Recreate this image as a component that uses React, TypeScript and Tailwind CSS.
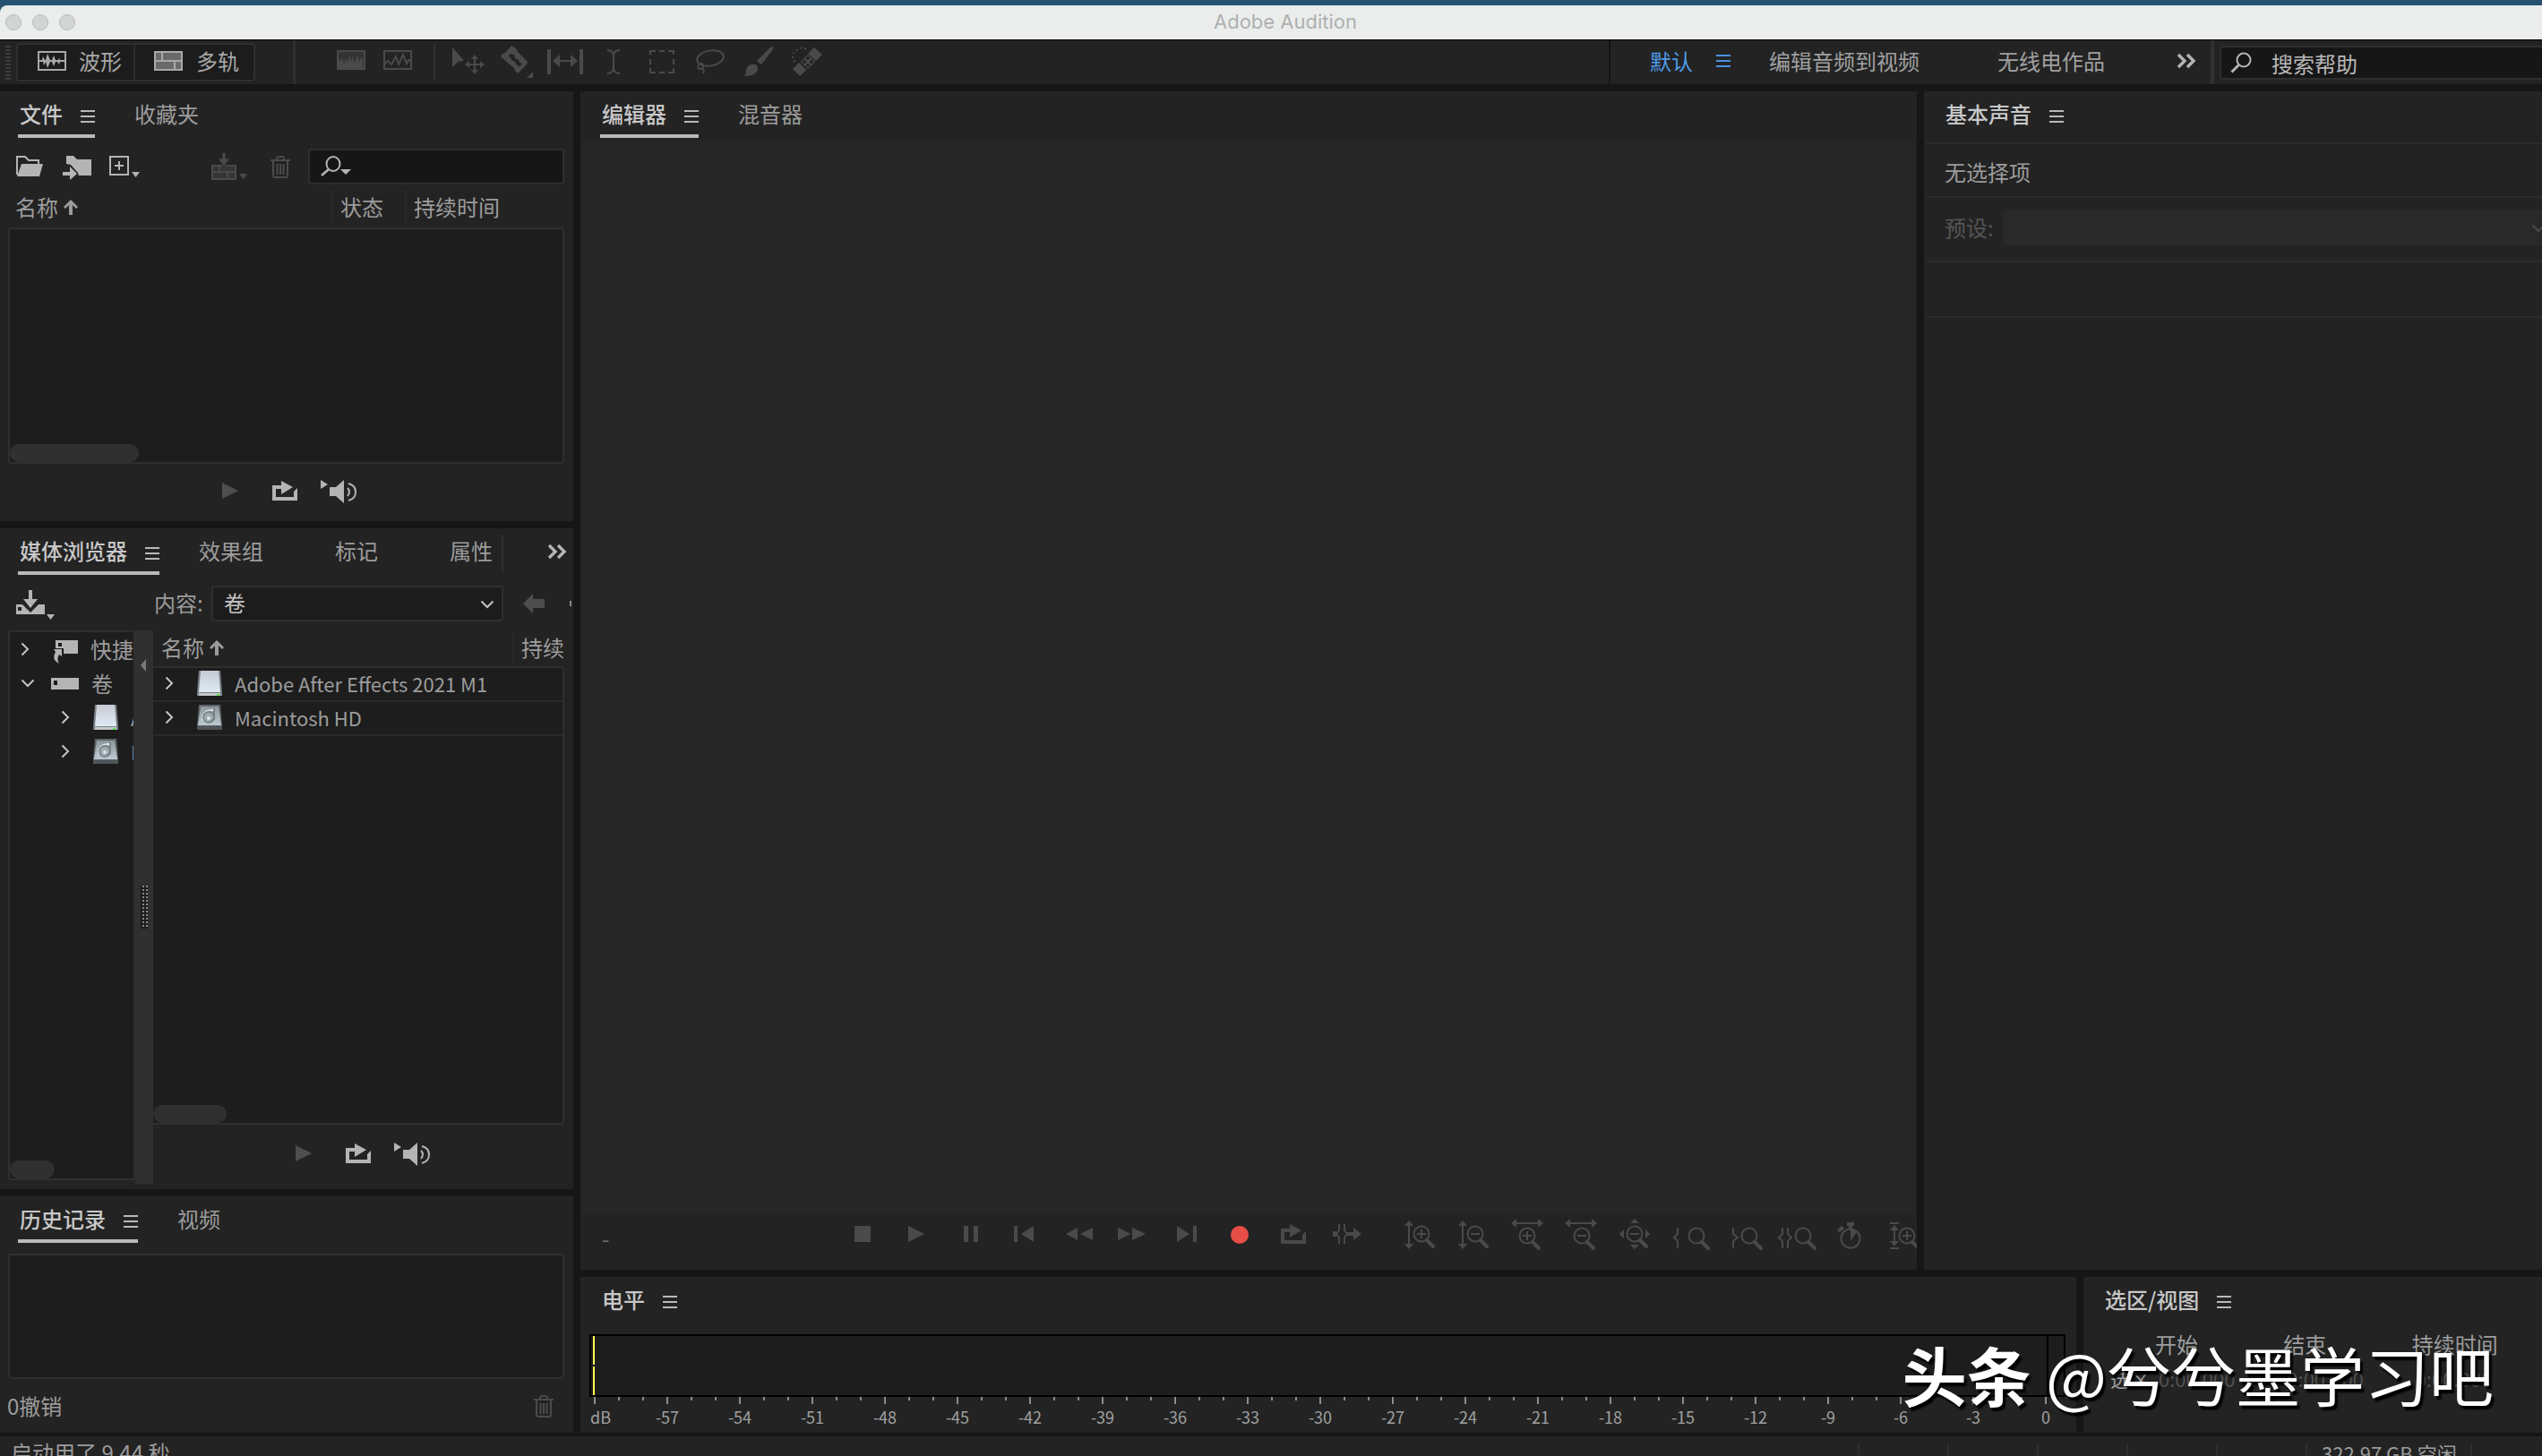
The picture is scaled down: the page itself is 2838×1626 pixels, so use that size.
import type { ReactNode } from "react";

type IconProps = { w: number; h: number; className?: string; children: ReactNode };

function Icon({ w, h, className = "", children }: IconProps) {
  return (
    <svg
      width={w}
      height={h}
      viewBox={`0 0 ${w} ${h}`}
      fill="currentColor"
      aria-hidden="true"
      className={`shrink-0 ${className}`}
    >
      {children}
    </svg>
  );
}

const line = { fill: "none", stroke: "currentColor", strokeWidth: 2 } as const;

/* ---------- shared pieces ---------- */

function MenuIcon({ className = "" }: { className?: string }) {
  return (
    <Icon w={16} h={14} className={className}>
      <path d="M0 0h16v2H0zM0 6h16v2H0zM0 12h16v2H0z" />
    </Icon>
  );
}

function ActiveTab({ children, underline = true }: { children: ReactNode; underline?: boolean }) {
  return (
    <div
      className={
        underline
          ? "flex items-center gap-5 border-b-4 border-[#b9b9b9] pt-1 pb-0.5"
          : "flex items-center gap-5 border-b-4 border-transparent pt-1 pb-0.5"
      }
    >
      <button className="pl-0.5 font-medium leading-[42px] text-[#c8c8c8]">{children}</button>
      <button aria-label="面板菜单" className="pt-1.5 text-[#b9b9b9]">
        <MenuIcon />
      </button>
    </div>
  );
}

function Tab({ children, className = "" }: { children: ReactNode; className?: string }) {
  return <button className={`pt-1 pb-1.5 leading-[42px] ${className}`}>{children}</button>;
}

function MoreIcon() {
  return (
    <Icon w={22} h={18}>
      <path d="M2 2l7 7-7 7M12 2l7 7-7 7" {...line} strokeWidth={3.4} />
    </Icon>
  );
}

function ChevronRight({ className = "" }: { className?: string }) {
  return (
    <Icon w={10} h={16} className={className}>
      <path d="M1.500 1.500L8 8l-6.500 6.500" {...line} />
    </Icon>
  );
}

function ChevronDown({ className = "" }: { className?: string }) {
  return (
    <Icon w={16} h={10} className={className}>
      <path d="M1.500 1.500L8 8l6.500-6.500" {...line} />
    </Icon>
  );
}

function TrashIcon() {
  return (
    <Icon w={22} h={25}>
      <path d="M0 5h22M7 5V3q0-2 2-2h4q2 0 2 2v2M3 6v16q0 2 2 2h12q2 0 2-2V6M7.500 9v12M11 9v12M14.500 9v12" {...line} />
    </Icon>
  );
}

function LoopIcon() {
  return (
    <Icon w={28} h={22}>
      <path d="M0 5h10V0l13 7-13 8V9H4v9h20v-6l4-4v14H0z" />
    </Icon>
  );
}

function PreviewBar({ className }: { className: string }) {
  return (
    <div className={`flex shrink-0 items-center ${className}`}>
      <button aria-label="播放" disabled className="mr-[38px] text-[#4e4e4e]">
        <Icon w={18} h={18}>
          <path d="M0 0l18 9L0 18z" />
        </Icon>
      </button>
      <button aria-label="循环播放" className="mr-[26px] text-[#b4b4b4]">
        <LoopIcon />
      </button>
      <button aria-label="自动播放" className="pt-0.5 text-[#b4b4b4]">
        <Icon w={40} h={28}>
          <path d="M0 1l8 5-8 5z" />
          <path d="M10 9h7l9-8v26l-9-8h-7z" />
          <path d="M30 10q4 4 0 9M31 5q8 2 8 9.500T31 24" {...line} />
        </Icon>
      </button>
    </div>
  );
}

function Thumb({ className }: { className: string }) {
  return <div className={`absolute bottom-0 left-0 h-5 rounded-full bg-[#303030] ${className}`} />;
}

function RemovableDrive() {
  return (
    <Icon w={28} h={28}>
      <defs>
        <linearGradient id="drv" x1="0" y1="0" x2="0" y2="1">
          <stop offset="0" stopColor="#c6c9d2" />
          <stop offset="1" stopColor="#dfebf5" />
        </linearGradient>
      </defs>
      <path d="M2 0h24l2 25v3H0v-3z" fill="#7b8187" />
      <path d="M4 0h20l2 24H2z" fill="url(#drv)" />
      <path d="M2 25h24v3H2z" fill="#c4c8c6" />
      <path d="M22 26h3v2h-3z" fill="#5be04a" />
    </Icon>
  );
}

function HardDrive() {
  return (
    <Icon w={28} h={28}>
      <defs>
        <linearGradient id="hdd" x1="0" y1="0" x2="0" y2="1">
          <stop offset="0" stopColor="#8d979b" />
          <stop offset="1" stopColor="#bccad1" />
        </linearGradient>
      </defs>
      <path d="M2 0h24l2 23v5H0v-5z" fill="#5d6467" />
      <path d="M4 2h20l3 21H1z" fill="url(#hdd)" />
      <path d="M6 18q0-11 8-12h3" fill="none" stroke="#dbe4e8" strokeWidth="1.500" />
      <circle cx="13" cy="14" r="6" fill="#9dabb1" stroke="#6f7b80" strokeWidth="1.500" />
      <circle cx="13" cy="15" r="2" fill="#dce5e9" />
      <path d="M19 4v12l-4 3" fill="none" stroke="#6f7b80" strokeWidth="1.500" />
      <path d="M16 5h2v2h-2z" fill="#eef3f5" />
      <path d="M0 24h28v4H0z" fill="#4e5457" />
    </Icon>
  );
}

/* ---------- title bar and toolbar ---------- */

function TitleBar() {
  return (
    <header className="shrink-0 bg-[#265372]">
      <div className="mt-1.5 grid h-[38px] grid-cols-[1fr_auto_1fr] items-center rounded-tl-lg bg-[#ebedec]">
        <div className="flex gap-3 pl-1.5">
          <button aria-label="关闭" className="size-[18px] rounded-full border border-[#b9bbba] bg-[#d3d5d4]" />
          <button aria-label="最小化" className="size-[18px] rounded-full border border-[#b9bbba] bg-[#d3d5d4]" />
          <button aria-label="缩放" className="size-[18px] rounded-full border border-[#b9bbba] bg-[#d3d5d4]" />
        </div>
        <h1 className="pb-0.5 pl-8 font-['Inter'] text-[22px] leading-8 text-[#aeb0af]">Adobe Audition</h1>
      </div>
    </header>
  );
}

const tools: { name: string; icon: ReactNode }[] = [
  {
    name: "移动工具",
    icon: (
      <Icon w={36} h={32}>
        <path d="M0 0l13 14.500-7 1.500-6 6z" />
        <path d="M25 10v18M16 19h18" {...line} />
        <path d="M25 8l4 5h-8zM25 30l4-5h-8zM14 19l5-4v8zM36 19l-5-4v8z" />
      </Icon>
    ),
  },
  {
    name: "切断所选剪辑工具",
    icon: (
      <Icon w={36} h={36}>
        <path
          fillRule="evenodd"
          d="M12 0l5 3 2 4 11 11-1 3-10 10-3-3-1-3L2 14l-2-2 2-3 3-1zM11 9l-3 3 3 1 1 3 4 2 2 4 3 1 3-3-3-1-1-3-4-2-1-4z"
        />
        <path d="M36 29v7h-7z" />
      </Icon>
    ),
  },
  {
    name: "滑动工具",
    icon: (
      <Icon w={40} h={28}>
        <path d="M0 0h4v28H0zM36 0h4v28h-4zM6 13l8-7v6h12V6l8 7-8 7v-6H14v6z" />
      </Icon>
    ),
  },
  {
    name: "时间选择工具",
    icon: (
      <Icon w={14} h={28}>
        <path d="M0 1q7 0 7 7v12q0 7-7 7M14 1q-7 0-7 7v12q0 7 7 7" {...line} />
      </Icon>
    ),
  },
  {
    name: "框选工具",
    icon: (
      <Icon w={28} h={28}>
        <path d="M1 6V2h6M11 2h6M21 2h6v4M27 11v6M27 21v5h-6M17 26h-6M7 26H1v-5M1 17v-6" {...line} />
      </Icon>
    ),
  },
  {
    name: "套索选择工具",
    icon: (
      <Icon w={32} h={28}>
        <ellipse cx="16" cy="10" rx="15" ry="8.500" transform="rotate(-10 16 10)" {...line} />
        <path d="M3 17q-2 5 2 5t3-4-4-1M6 21q4 2 2 6" {...line} />
      </Icon>
    ),
  },
  {
    name: "画笔选择工具",
    icon: (
      <Icon w={34} h={34}>
        <path d="M32 0q2 1 1 3L20 20l-5-4L29 2q1-2 3-2zM9 20q6-1 7 4 0 9-16 9 3-2 3-6 1-6 6-7z" />
      </Icon>
    ),
  },
  {
    name: "污点修复画笔工具",
    icon: (
      <Icon w={34} h={34}>
        <path d="M25 1l9 8-7 7-9-8zM8 18l8 8-7 7-8-8z" />
        <path fillRule="evenodd" d="M18 9l8 8-8 8-8-8zM18 11a2 2 0 100 4 2 2 0 000-4zM22 15a2 2 0 100 4 2 2 0 000-4zM14 15a2 2 0 100 4 2 2 0 000-4zM18 19a2 2 0 100 4 2 2 0 000-4z" />
        <path d="M16 3Q12 0 7 3T1 9t3 9" {...line} strokeDasharray="2 3" />
      </Icon>
    ),
  },
];

function Toolbar() {
  return (
    <div className="flex h-[50px] shrink-0 items-center overflow-hidden border-t border-black bg-[#232323]">
      <div className="ml-1.5 h-[38px] w-1.5 shrink-0 bg-[repeating-linear-gradient(to_bottom,#3c3c3c_0_2px,transparent_2px_4px)]" />
      <div className="ml-1.5 flex shrink-0 rounded border-2 border-[#2f2f2f] bg-[#1c1c1c] leading-9 text-[#a8a8a8]">
        <button className="flex items-center gap-3.5 border-r-2 border-[#2f2f2f] pr-[13px] pb-[3px] pl-[22px]">
          <Icon w={32} h={22}>
            <path d="M1 1h30v20H1z" {...line} />
            <path d="M2 10h3l1-4 2 4h1l2-7 3 7h2l2-5 2 5h3l1-2 1 2h5v2h-5l-1 3-2-3h-2l-2 5-2-5h-2l-3 7-2-7H9l-2 4-1-4H2z" />
          </Icon>
          波形
        </button>
        <button className="flex items-center gap-[15px] pr-4 pb-[3px] pl-[21px]">
          <Icon w={32} h={22}>
            <path d="M2 2h28v18H2z" fill="#6a6a6a" />
            <path d="M1 1h30v20H1zM1 11h30M9 1v10M23 11v10" {...line} />
          </Icon>
          多轨
        </button>
      </div>
      <div className="ml-[42px] h-full w-[3px] shrink-0 bg-[#303030]" />
      <div className="ml-9 flex shrink-0 text-[#4a4a4a]">
        <button disabled aria-label="显示频谱" className="flex w-[52px] justify-center pb-1.5">
          <Icon w={32} h={22}>
            <path d="M1 1h30v20H1z" fill="#333" stroke="currentColor" strokeWidth="2" />
            <path d="M2 21V9l2 4 2-6 2 9 2-7 2 5 2-9 2 8 2-7 2 9 3-10 2 9 2-7 2 3v11z" />
          </Icon>
        </button>
        <button disabled aria-label="显示音高" className="flex w-[52px] justify-center pb-1.5">
          <Icon w={32} h={22}>
            <path d="M1 1h30v20H1z" {...line} />
            <path d="M2 15l3-3 4 4 5-9 3 9 5-11 4 10 2-4 3 1" {...line} />
          </Icon>
        </button>
      </div>
      <div className="ml-3.5 h-[42px] w-0.5 shrink-0 bg-[#303030]" />
      <div className="ml-2.5 flex shrink-0 items-center pb-0.5 text-[#4a4a4a]">
        {tools.map((t) => (
          <button key={t.name} disabled aria-label={t.name} className="flex w-[54px] items-center justify-center">
            {t.icon}
          </button>
        ))}
      </div>
      <nav className="ml-auto flex h-full shrink-0 items-center border-r-4 border-l-2 border-r-[#303030] border-l-[#141414] pr-4 pb-[3px] pl-11 text-[#a0a0a0]">
        <button className="text-[#4f9bea]">默认</button>
        <button aria-label="工作区菜单" className="ml-[26px] text-[#4a90e2]">
          <MenuIcon />
        </button>
        <button className="ml-[43px]">编辑音频到视频</button>
        <button className="ml-[87px]">无线电作品</button>
        <button aria-label="更多工作区" className="ml-20 text-[#b4b4b4]">
          <MoreIcon />
        </button>
      </nav>
      <label className="ml-1.5 flex h-[38px] w-[360px] shrink-0 items-center rounded-l border-2 border-r-0 border-[#2e2e2e] bg-[#161616] pl-2.5 text-[#b4b4b4]">
        <Icon w={24} h={24}>
          <circle cx="15" cy="9" r="7.500" {...line} />
          <path d="M9.500 14.500L1.500 22.500" {...line} strokeWidth={3} />
        </Icon>
        <input
          aria-label="搜索帮助"
          placeholder="搜索帮助"
          className="ml-[22px] w-72 bg-transparent pt-0.5 outline-none placeholder:text-[#b8b8b8]"
        />
      </label>
    </div>
  );
}

/* ---------- left column ---------- */

function FilesPanel() {
  return (
    <section className="bg-[#232323]">
      <div className="flex gap-[44px] pl-5">
        <ActiveTab>文件</ActiveTab>
        <Tab>收藏夹</Tab>
      </div>
      <div className="mt-3 flex h-10 items-center pl-[18px] text-[#b4b4b4]">
        <button aria-label="打开文件" className="mb-0.5">
          <Icon w={30} h={23}>
            <path d="M1 21V1h9l4 4h11v5" {...line} />
            <path d="M6 9h24l-4 14H1z" />
          </Icon>
        </button>
        <button aria-label="导入文件" className="mt-0.5 ml-[22px]">
          <Icon w={32} h={27}>
            <path d="M4 9V0h8l4 4h16v18H18l-1-3-8-9z" />
            <path d="M0 18h8v-6l8 8-8 7v-5H0z" />
          </Icon>
        </button>
        <button aria-label="新建文件" className="ml-5">
          <Icon w={34} h={26}>
            <path d="M1 2h20v20H1zM11 7v10M6 12h10" {...line} />
            <path d="M25 19h9l-4.500 6z" />
          </Icon>
        </button>
        <button aria-label="插入到多轨混音中" disabled className="mb-0.5 ml-20 text-[#4a4a4a]">
          <Icon w={40} h={31}>
            <path d="M1 15h26v15H1z" fill="#353535" />
            <path d="M1 15h26v15H1zM1 22h26M9 15v7M18 22v8" {...line} />
            <path d="M12 0h4v7h5l-7 9-7-9h5z" stroke="#232323" />
            <path d="M31 24h9l-4.500 6z" />
          </Icon>
        </button>
        <button aria-label="关闭所选文件" disabled className="ml-[26px] text-[#4a4a4a]">
          <TrashIcon />
        </button>
        <label className="ml-5 flex h-10 w-[286px] items-center rounded border-2 border-[#2f2f2f] bg-[#161616] pl-3">
          <Icon w={34} h={24}>
            <ellipse cx="14" cy="9" rx="7.500" ry="8" {...line} />
            <path d="M9 15l-8 7" {...line} strokeWidth={2.500} />
            <path d="M22 15h12l-6 6z" />
          </Icon>
          <input aria-label="搜索文件" className="ml-2 w-52 bg-transparent outline-none" />
        </label>
      </div>
      <table className="mx-[9px] mt-1.5 mb-1 w-[621px] border-separate border-spacing-0 text-left leading-[38px]">
        <thead>
          <tr>
            <th className="pl-2 font-normal">
              <span className="flex items-center gap-1.5">
                名称 <SortArrow />
              </span>
            </th>
            <th className="w-[82px] border-l-2 border-[#292929] pl-2 font-normal">状态</th>
            <th className="w-[178px] border-l-2 border-[#292929] pl-2 font-normal">持续时间</th>
          </tr>
        </thead>
      </table>
      <div className="relative mr-2.5 ml-[9px] h-[264px] rounded border-2 border-[#2f2f2f] bg-[#1d1d1d]">
        <Thumb className="w-36" />
      </div>
      <PreviewBar className="h-16 pb-1 pl-[248px]" />
    </section>
  );
}

function SortArrow() {
  return (
    <Icon w={16} h={17}>
      <path d="M8 0l8 8-2 2-4-4v11H6V6l-4 4-2-2z" />
    </Icon>
  );
}

function MediaPanel() {
  return (
    <section className="flex min-h-0 flex-1 flex-col bg-[#232323]">
      <div className="flex shrink-0 overflow-hidden pl-5">
        <ActiveTab>媒体浏览器</ActiveTab>
        <Tab className="ml-[44px]">效果组</Tab>
        <Tab className="ml-20">标记</Tab>
        <Tab className="ml-20">属性</Tab>
        <div className="mt-2 mb-1 ml-2.5 border-r-2 border-[#303030]" />
        <button aria-label="更多面板" className="ml-[49px] text-[#b4b4b4]">
          <MoreIcon />
        </button>
      </div>
      <div className="mt-3 flex h-10 shrink-0 items-center overflow-hidden pl-[18px]">
        <button aria-label="导入" className="mt-1 text-[#b4b4b4]">
          <Icon w={44} h={34}>
            <path fillRule="evenodd" d="M0 16h7l9 9 9-9h7v11H0zM2 19v4h4v-4z" />
            <path d="M14 0h4v10h6l-8 10-8-10h6z" />
            <path d="M34 27h9l-4.500 6z" />
          </Icon>
        </button>
        <label htmlFor="volume" className="ml-[110px] pb-0.5">
          内容:
        </label>
        <div className="relative ml-auto w-[326px]">
          <select
            id="volume"
            className="h-10 w-full appearance-none rounded border-2 border-[#2f2f2f] bg-[#1c1c1c] pb-0.5 pl-3 text-[#c4c4c4]"
          >
            <option>卷</option>
          </select>
          <ChevronDown className="pointer-events-none absolute top-4 right-2.5 text-[#c4c4c4]" />
        </div>
        <button aria-label="后退" disabled className="ml-[22px] text-[#4e4e4e]">
          <Icon w={24} h={22}>
            <path d="M0 11L11 0v6h13v10H11v6z" />
          </Icon>
        </button>
        <button aria-label="前进" className="mr-0.5 ml-7 h-1.5 w-0.5 shrink-0 bg-[#8a8a8a]" />
      </div>
      <div className="mt-2.5 flex min-h-0 flex-1 pb-1.5 pl-[9px]">
        <ul className="relative mb-1 w-[142px] shrink-0 overflow-hidden rounded border-2 border-[#2f2f2f] bg-[#1d1d1d] leading-[38px] whitespace-nowrap">
          <li className="flex items-center pl-3">
            <ChevronRight className="mr-[26px] text-[#c4c4c4]" />
            <Icon w={28} h={28} className="mt-2 text-[#b4b4b4]">
              <path fillRule="evenodd" d="M3 0h25v15H12V9H3zM6 3v4h4V3z" />
              <path d="M1 10h9v8L7 16q-3 5 0 10Q-2 22 3 13z" />
            </Icon>
            <span className="ml-3.5">快捷键</span>
          </li>
          <li className="flex items-center pl-3">
            <ChevronDown className="mr-[18px] text-[#c4c4c4]" />
            <Icon w={31} h={13} className="text-[#b4b4b4]">
              <path fillRule="evenodd" d="M0 0h31v13H0zM3 3v5h4V3z" />
            </Icon>
            <span className="ml-3.5">卷</span>
          </li>
          <li className="flex items-center pl-[57px] text-[22px]">
            <ChevronRight className="mr-[26px] text-[#c4c4c4]" />
            <RemovableDrive />
            <span className="ml-3.5">Adobe After Effects 2021 M1</span>
          </li>
          <li className="flex items-center pl-[57px] text-[22px]">
            <ChevronRight className="mr-[26px] text-[#c4c4c4]" />
            <HardDrive />
            <span className="ml-3.5">Macintosh HD</span>
          </li>
          <li aria-hidden="true">
            <Thumb className="w-[50px]" />
          </li>
        </ul>
        <div className="relative flex w-5 shrink-0 items-center justify-center bg-[#303030]">
          <Icon w={6} h={14} className="absolute top-8 left-1.5 text-[#7a7a7a]">
            <path d="M6 0v14L0 7z" />
          </Icon>
          <div className="h-12 w-2 bg-[conic-gradient(#8a8a8a_25%,#1d1d1d_0)] bg-[length:4px_4px]" />
        </div>
        <div className="mr-2.5 flex min-w-0 flex-1 flex-col">
          <div className="flex h-10 shrink-0 items-center justify-between pb-0.5 pl-[9px]">
            <span className="flex items-center gap-1.5">
              名称 <SortArrow />
            </span>
            <span className="border-l-2 border-[#292929] pl-2 leading-8">持续</span>
          </div>
          <div className="relative min-h-0 flex-1 rounded-r border-2 border-l-0 border-[#2f2f2f] bg-[#1d1d1d]">
            <table className="w-full text-[22px] leading-[34px]">
              <tbody>
                <tr className="border-b-2 border-[#2a2a2a]">
                  <td className="flex items-center pb-0.5 pl-[13px]">
                    <ChevronRight className="mr-[26px] text-[#c4c4c4]" />
                    <RemovableDrive />
                    <span className="ml-3.5">Adobe After Effects 2021 M1</span>
                  </td>
                </tr>
                <tr className="border-b-2 border-[#2a2a2a]">
                  <td className="flex items-center pb-0.5 pl-[13px]">
                    <ChevronRight className="mr-[26px] text-[#c4c4c4]" />
                    <HardDrive />
                    <span className="ml-3.5">Macintosh HD</span>
                  </td>
                </tr>
              </tbody>
            </table>
            <Thumb className="w-[82px]" />
          </div>
          <PreviewBar className="h-[66px] pb-0.5 pl-[159px]" />
        </div>
      </div>
    </section>
  );
}

function HistoryPanel() {
  return (
    <section className="bg-[#232323]">
      <div className="flex gap-[44px] pl-5">
        <ActiveTab>历史记录</ActiveTab>
        <Tab>视频</Tab>
      </div>
      <div className="mt-3 mr-2.5 ml-[9px] h-[140px] rounded border-2 border-[#2f2f2f] bg-[#1d1d1d]" />
      <div className="flex h-[60px] items-center justify-between pr-[22px] pl-2">
        <span>0撤销</span>
        <button aria-label="删除历史记录" disabled className="text-[#4a4a4a]">
          <TrashIcon />
        </button>
      </div>
    </section>
  );
}

/* ---------- editor ---------- */

type Key = { name: string; art: ReactNode };

const transport: Key[] = [
  { name: "停止", art: <path d="M21 12h18v18H21z" /> },
  { name: "播放", art: <path d="M21 12l18 9-18 9z" /> },
  { name: "暂停", art: <path d="M23 12h5v18h-5zM34 12h5v18h-5z" /> },
  { name: "移到上一个", art: <path d="M19 12h4v18h-4zM41 12v18l-14-9z" /> },
  { name: "快退", art: <path d="M30 14v14l-13-7zM47 14v14l-14-7z" /> },
  { name: "快进", art: <path d="M15 14v14l15-7zM31 14v14l15-7z" /> },
  { name: "移到下一个", art: <path d="M21 12v18l14-9zM39 12h4v18h-4z" /> },
  { name: "录制", art: <circle cx="31" cy="22" r="10" fill="#e64e47" /> },
  { name: "循环播放", art: <path d="M17 15h10v-5l13 7-13 8v-6h-6v9h20v-6l4-4v14H17z" /> },
  {
    name: "跳过所选项目",
    art: (
      <>
        <path d="M22 10v7l-3 4 3 4v7M28 10v7l3 4-3 4v7" {...line} />
        <path d="M15 18h4v6h-4zM31 19h7v-5l9 7-9 7v-5h-7z" />
      </>
    ),
  },
];

function Lens({ x, y, sign = "" }: { x: number; y: number; sign?: string }) {
  return (
    <g transform={`translate(${x} ${y})`}>
      <circle r="8.500" {...line} />
      <path d="M6 7l7 7" {...line} strokeWidth={4} strokeLinecap="round" />
      {sign !== "" && <path d="M-5 0H5" {...line} />}
      {sign === "+" && <path d="M0-5V5" {...line} />}
    </g>
  );
}

function VArrow({ x }: { x: number }) {
  return (
    <g transform={`translate(${x} 0)`}>
      <path d="M0 9v26" {...line} />
      <path d="M0 6l5 6H-5zM0 38l5-6H-5z" />
    </g>
  );
}

function HArrow() {
  return (
    <>
      <path d="M15 9h30" {...line} />
      <path d="M12 9l6-5v10zM48 9l-6-5v10z" />
    </>
  );
}

const zooms: Key[] = [
  { name: "放大振幅", art: <><VArrow x={18} /><Lens x={32} y={21} sign="+" /></> },
  { name: "缩小振幅", art: <><VArrow x={18} /><Lens x={32} y={21} sign="-" /></> },
  { name: "放大时间", art: <><HArrow /><Lens x={30} y={23} sign="+" /></> },
  { name: "缩小时间", art: <><HArrow /><Lens x={31} y={23} sign="-" /></> },
  {
    name: "全部缩小",
    art: (
      <>
        <path d="M30 4l5 5H25zM30 38l5-5H25zM13 21l5-5v10zM47 21l-5-5v10z" />
        <Lens x={30} y={21} sign="-" />
      </>
    ),
  },
  { name: "放大入点", art: <><path d="M18 14v7l-4 4 4 4v8" {...line} /><Lens x={39} y={23} /></> },
  { name: "放大出点", art: <><path d="M20 14v7l5 4-5 4v8" {...line} /><Lens x={38} y={23} /></> },
  {
    name: "缩放至选区",
    art: (
      <>
        <path d="M15 14v7l-4 4 4 4v8M21 14v7l4 4-4 4v8" {...line} />
        <Lens x={38} y={23} />
      </>
    ),
  },
  {
    name: "缩放至时间",
    art: (
      <>
        <circle cx="31" cy="26" r="10.500" {...line} />
        <path d="M27 8h8v4h-2v3h-4v-3h-2zM31 15l7 4-7 10zM16 18l4-6 4 2-2 3-4 2z" />
      </>
    ),
  },
  {
    name: "缩放所选音轨",
    art: (
      <>
        <path d="M15 9h10M15 37h10M20 14v18" {...line} />
        <path d="M20 11l5 6H15zM20 35l5-6H15z" />
        <Lens x={34} y={23} sign="+" />
      </>
    ),
  },
];

function KeyRow({ keys }: { keys: Key[] }) {
  return (
    <div className="flex shrink-0">
      {keys.map((k) => (
        <button key={k.name} aria-label={k.name}>
          <Icon w={60} h={40}>
            {k.art}
          </Icon>
        </button>
      ))}
    </div>
  );
}

function EditorPanel() {
  return (
    <section className="flex min-w-0 flex-1 flex-col bg-[#232323]">
      <div className="flex h-14 items-start gap-[44px] pl-[22px]">
        <ActiveTab>编辑器</ActiveTab>
        <Tab>混音器</Tab>
      </div>
      <div className="mx-0.5 flex-1 bg-[#262626]" />
      <div className="flex h-[62px] items-start overflow-hidden pt-px text-[#4a4a4a]">
        <div className="flex w-[285px] shrink-0 items-center pt-2.5 pl-6 text-[#6a6a6a]">-</div>
        <KeyRow keys={transport} />
        <div className="ml-[22px]">
          <KeyRow keys={zooms} />
        </div>
      </div>
    </section>
  );
}

/* ---------- right column ---------- */

function EssentialSoundPanel() {
  return (
    <section className="w-[690px] shrink-0 overflow-hidden bg-[#232323]">
      <div className="flex h-[57px] items-start pl-[22px]">
        <ActiveTab underline={false}>基本声音</ActiveTab>
      </div>
      <div className="ml-0.5 divide-y-2 divide-[#2c2c2c] border-y-2 border-[#2c2c2c]">
        <p className="h-[60px] pl-[21px] leading-[62px]">无选择项</p>
        <div className="flex h-[72px] items-center pb-1 pl-[21px] text-[#555]">
          <label htmlFor="preset">预设:</label>
          <div className="relative ml-auto w-[602px]">
            <select
              id="preset"
              disabled
              className="h-10 w-full appearance-none rounded-l bg-[#292929] opacity-100"
            />
            <ChevronDown className="pointer-events-none absolute top-4 -right-1 text-[#4a4a4a]" />
          </div>
        </div>
        <div className="h-[60px]" />
      </div>
    </section>
  );
}

/* ---------- bottom row ---------- */

const ticks = Array.from({ length: 61 }, (_, i) => i);

function LevelsPanel() {
  return (
    <section className="flex min-w-0 flex-1 flex-col bg-[#232323] pr-3 pl-2.5">
      <div className="flex h-16 items-start pl-3">
        <ActiveTab underline={false}>电平</ActiveTab>
      </div>
      <div className="flex h-[70px] shrink-0 border-2 border-black bg-[#1d1d1d]">
        <div className="ml-0.5 flex w-0.5 flex-col gap-0.5">
          <div className="flex-1 bg-[#fdfd50]" />
          <div className="flex-1 bg-[#fdfd50]" />
        </div>
        <div className="ml-auto w-[19px] border-l-2 border-black" />
      </div>
      <div className="mr-[23px] ml-[5px]">
        <svg width="100%" height="38" className="overflow-visible" fill="#a0a0a0" fontSize="18">
          {ticks.map((i) => (
            <rect key={i} x={`${(i / 60) * 100}%`} y="0" width="2" height={i % 3 === 0 ? 8 : 4} fill="#8c8c8c" />
          ))}
          <text x="-4" y="30">
            dB
          </text>
          <g transform="translate(1 0)">
            {ticks
              .filter((i) => i % 3 === 0 && i > 0)
              .map((i) => (
                <text key={i} x={`${(i / 60) * 100}%`} y="30" textAnchor="middle">
                  {i - 60}
                </text>
              ))}
          </g>
        </svg>
      </div>
    </section>
  );
}

function SelectionPanel() {
  return (
    <section className="w-[512px] shrink-0 bg-[#232323]">
      <div className="flex h-14 items-start pl-[22px]">
        <ActiveTab underline={false}>选区/视图</ActiveTab>
      </div>
      <table className="ml-[30px] w-[480px] table-fixed text-left leading-[38px]">
        <thead>
          <tr>
            <td className="w-[50px]" />
            <th className="font-normal">开始</th>
            <th className="font-normal">结束</th>
            <th className="font-normal">持续时间</th>
          </tr>
        </thead>
        <tbody className="text-[22px] text-[#505050]">
          <tr>
            <th className="font-normal whitespace-nowrap text-[#a0a0a0]">选区</th>
            <td className="pl-1">0:00.000</td>
            <td className="pl-1">0:00.000</td>
            <td className="pl-1">0:00.000</td>
          </tr>
        </tbody>
      </table>
    </section>
  );
}

function StatusBar() {
  return (
    <footer className="flex h-[22px] shrink-0 justify-between overflow-hidden bg-[#232323]">
      <p className="pl-3 leading-9">启动用了 9.44 秒</p>
      <div className="mt-2 flex leading-5">
        <div className="w-[100px] border-l-2 border-[#2e2e2e]" />
        <div className="w-[100px] border-l-2 border-[#2e2e2e]" />
        <div className="w-[100px] border-l-2 border-[#2e2e2e]" />
        <div className="w-[100px] border-l-2 border-[#2e2e2e]" />
        <div className="w-[100px] border-l-2 border-[#2e2e2e]" />
        <p className="w-[184px] border-l-2 border-[#2e2e2e] pl-4 text-[22px] whitespace-nowrap">322.97 GB 空闲</p>
        <div className="w-20 border-l-2 border-[#2e2e2e]" />
      </div>
    </footer>
  );
}

export default function App() {
  return (
    <div
      lang="zh-CN"
      className="relative flex h-screen flex-col overflow-hidden bg-[#161616] font-['Noto_Sans_CJK_SC',sans-serif] text-2xl text-[#9c9c9c]"
    >
      <TitleBar />
      <Toolbar />
      <main className="flex min-h-0 flex-1 gap-2 pt-2 pb-1">
        <div className="flex w-[640px] shrink-0 flex-col gap-2">
          <FilesPanel />
          <MediaPanel />
          <HistoryPanel />
        </div>
        <div className="flex min-w-0 flex-1 flex-col gap-2">
          <div className="flex min-h-0 flex-1 gap-2">
            <EditorPanel />
            <EssentialSoundPanel />
          </div>
          <div className="flex h-[174px] shrink-0 gap-2">
            <LevelsPanel />
            <SelectionPanel />
          </div>
        </div>
      </main>
      <StatusBar />
      <p className="pointer-events-none absolute right-[54px] bottom-14 flex items-center gap-4 text-7xl text-white [text-shadow:3px_4px_2px_#000]">
        <strong className="font-bold">头条</strong>
        <span>@兮兮墨学习吧</span>
      </p>
    </div>
  );
}
